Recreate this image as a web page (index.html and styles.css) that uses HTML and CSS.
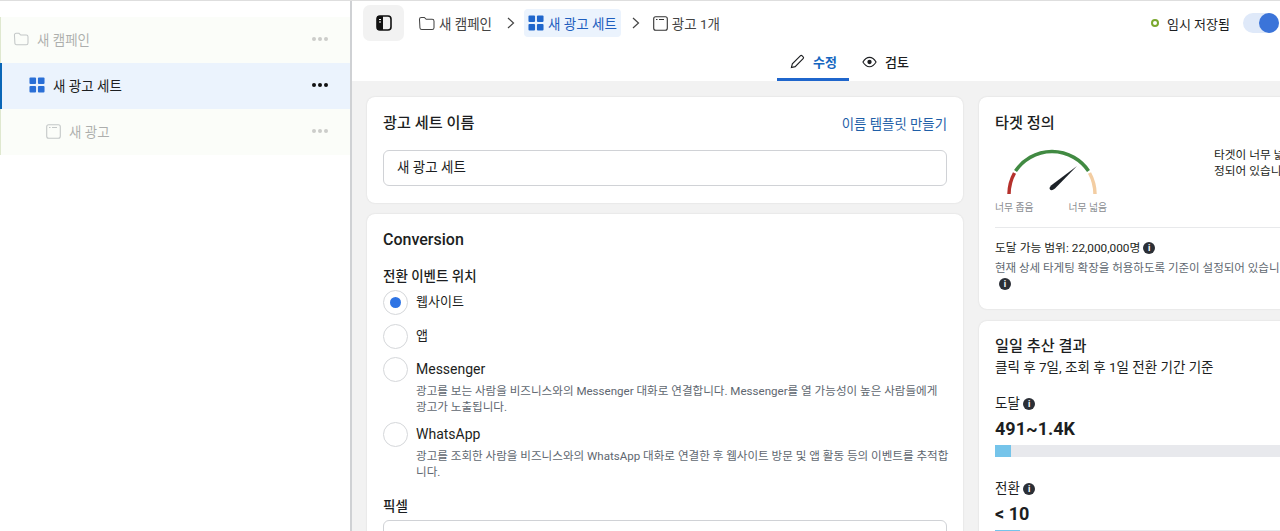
FILE: index.html
```html
<!DOCTYPE html>
<html lang="ko">
<head>
	<meta charset="utf-8">
	<title>새 광고 세트</title>
	<link rel="stylesheet" href="styles.css">
</head>
<body>
	<div class="app">
		<!-- 왼쪽 트리 -->
		<aside class="tree">
			<div class="treeRow dim">
				<svg class="ico" width="16" height="14" viewBox="0 0 18 16"><path d="M1.500 3.500q0-2 2-2h3.200l2 2h6.300q2 0 2 2v7q0 2-2 2h-11q-2 0-2-2z" fill="none" stroke="#606770" stroke-width="1.200"/></svg>
				<span class="treeName">새 캠페인</span>
				<span class="dots"><i></i><i></i><i></i></span>
			</div>
			<div class="treeRow active lv1">
				<svg class="ico" width="16" height="16" viewBox="0 0 17 17"><g fill="#2a6fd6"><rect x="0.500" y="0.500" width="7" height="7" rx="1"/><rect x="9.500" y="0.500" width="7" height="7" rx="1"/><rect x="0.500" y="9.500" width="7" height="7" rx="1"/><rect x="9.500" y="9.500" width="7" height="7" rx="1"/></g></svg>
				<span class="treeName">새 광고 세트</span>
				<span class="dots"><i></i><i></i><i></i></span>
			</div>
			<div class="treeRow dim lv2">
				<svg class="ico" width="15" height="15" viewBox="0 0 15 15"><rect x="0.700" y="0.700" width="13.600" height="13.600" rx="2" fill="none" stroke="#606770" stroke-width="1.100"/><path d="M3 3.500h1.500M6 3.500h5" stroke="#606770" stroke-width="1"/></svg>
				<span class="treeName">새 광고</span>
				<span class="dots"><i></i><i></i><i></i></span>
			</div>
		</aside>

		<main class="main">
			<header class="top">
				<div class="crumbBar">
					<button class="panelBtn">
						<svg width="16" height="16" viewBox="0 0 16 16"><rect x="1" y="1" width="14" height="14" rx="3" fill="none" stroke="#111" stroke-width="1.600"/><path d="M3 1h4v14H3q-2 0-2-2V3q0-2 2-2z" fill="#111"/><path d="M3 4.500h2M3 7h2" stroke="#fff" stroke-width="1"/></svg>
					</button>
					<div class="crumbs">
						<span class="crumb">
							<svg width="17" height="15" viewBox="0 0 18 16"><path d="M1.500 3.500q0-2 2-2h3.200l2 2h6.300q2 0 2 2v7q0 2-2 2h-11q-2 0-2-2z" fill="none" stroke="#444" stroke-width="1.100"/></svg>
							새 캠페인
						</span>
						<svg class="chev" width="8" height="12" viewBox="0 0 8 12"><path d="M1 1l5.500 5L1 11" fill="none" stroke="#444" stroke-width="1.200"/></svg>
						<span class="crumb current">
							<svg width="16" height="16" viewBox="0 0 17 17"><g fill="#1f66cc"><rect x="0.500" y="0.500" width="7" height="7" rx="1"/><rect x="9.500" y="0.500" width="7" height="7" rx="1"/><rect x="0.500" y="9.500" width="7" height="7" rx="1"/><rect x="9.500" y="9.500" width="7" height="7" rx="1"/></g></svg>
							새 광고 세트
						</span>
						<svg class="chev" width="8" height="12" viewBox="0 0 8 12"><path d="M1 1l5.500 5L1 11" fill="none" stroke="#444" stroke-width="1.200"/></svg>
						<span class="crumb">
							<svg width="15" height="15" viewBox="0 0 15 15"><rect x="0.700" y="0.700" width="13.600" height="13.600" rx="2" fill="none" stroke="#333" stroke-width="1.100"/><path d="M3 3.500h1.500M6 3.500h5" stroke="#333" stroke-width="1"/></svg>
							광고 1개
						</span>
					</div>
					<div class="saved">
						<span class="savedDot"></span>
						<span>임시 저장됨</span>
						<span class="toggle"><span class="knob"></span></span>
					</div>
				</div>
				<nav class="tabs">
					<span class="tab on">
						<svg width="15" height="15" viewBox="0 0 16 16"><path d="M1.500 14.500l1-4L11 2q1-1 2 0l1 1q1 1 0 2l-8.500 8.500z" fill="none" stroke="#1c1e21" stroke-width="1.200"/></svg>
						수정
					</span>
					<span class="tab">
						<svg width="15" height="12" viewBox="0 0 16 12"><path d="M1 6q3-5 7-5t7 5q-3 5-7 5T1 6z" fill="none" stroke="#1c1e21" stroke-width="1.200"/><circle cx="8" cy="6" r="2.300" fill="#1c1e21"/></svg>
						검토
					</span>
				</nav>
			</header>

			<div class="content">
				<div class="col left">
					<section class="card nameCard">
						<div class="cardHead">
							<h2>광고 세트 이름</h2>
							<a class="link">이름 템플릿 만들기</a>
						</div>
						<div class="input">새 광고 세트</div>
					</section>

					<section class="card convCard">
						<h2 class="convTitle">Conversion</h2>
						<h3 class="fieldLabel">전환 이벤트 위치</h3>
						<div class="radio checked">
							<span class="circle"></span>
							<div class="radioText"><div class="radioName">웹사이트</div></div>
						</div>
						<div class="radio">
							<span class="circle"></span>
							<div class="radioText"><div class="radioName">앱</div></div>
						</div>
						<div class="radio hasDesc">
							<span class="circle"></span>
							<div class="radioText">
								<div class="radioName latin">Messenger</div>
								<p class="desc">광고를 보는 사람을 비즈니스와의 Messenger 대화로 연결합니다. Messenger를 열 가능성이 높은 사람들에게 광고가 노출됩니다.</p>
							</div>
						</div>
						<div class="radio hasDesc">
							<span class="circle"></span>
							<div class="radioText">
								<div class="radioName latin">WhatsApp</div>
								<p class="desc">광고를 조회한 사람을 비즈니스와의 WhatsApp 대화로 연결한 후 웹사이트 방문 및 앱 활동 등의 이벤트를 추적합니다.</p>
							</div>
						</div>
						<h3 class="fieldLabel pixel">픽셀</h3>
						<div class="input tall"></div>
					</section>
				</div>

				<div class="col right">
					<section class="card audCard">
						<h2>타겟 정의</h2>
						<div class="gaugeRow">
							<div class="gauge">
								<svg width="112" height="59" viewBox="0 0 112 59">
									<path d="M14 53A44 44 0 0 1 19.500 32" fill="none" stroke="#b5312c" stroke-width="3.500"/>
									<path d="M20.500 30A44 44 0 0 1 93.500 30" fill="none" stroke="#418a42" stroke-width="3.500"/>
									<path d="M94.500 32A44 44 0 0 1 100 53" fill="none" stroke="#f3cda2" stroke-width="3.500"/>
									<path d="M82 25L60 47.500Q56.500 50.500 55 48.500Q54 46.500 56 44.500z" fill="#1c2127"/>
								</svg>
								<div class="gaugeLabels"><span>너무 좁음</span><span>너무 넓음</span></div>
							</div>
							<p class="gaugeNote">타겟이 너무 넓습니다. 타겟 설정 기준이 설<br>정되어 있습니다.</p>
						</div>
						<hr class="line">
						<div class="reach">도달 가능 범위: 22,000,000명 <span class="info">i</span></div>
						<p class="reachNote">현재 상세 타게팅 확장을 허용하도록 기준이 설정되어 있습니다.<br><span class="info indent">i</span></p>
					</section>

					<section class="card estCard">
						<h2>일일 추산 결과</h2>
						<div class="estSub">클릭 후 7일, 조회 후 1일 전환 기간 기준</div>
						<div class="metric">도달 <span class="info">i</span></div>
						<div class="metricNum">491~1.4K</div>
						<div class="bar"><div class="fill" style="width: 16px"></div></div>
						<div class="metric second">전환 <span class="info">i</span></div>
						<div class="metricNum">&lt; 10</div>
						<div class="bar"><div class="fill" style="width: 25px"></div></div>
					</section>
				</div>
			</div>
		</main>
	</div>
</body>
</html>
```

FILE: styles.css
```css
* {
	margin: 0;
	padding: 0;
	box-sizing: border-box;
}

html, body {
	height: 531px;
	overflow: hidden;
}

body {
	font-family: Roboto, "Noto Sans CJK KR", sans-serif;
	color: #1c1e21;
	background: #fff;
}

svg {
	display: block;
	flex: none;
}

.app {
	display: flex;
	width: 1280px;
	height: 531px;
	border-top: 1px solid #dedede;
}

/* 왼쪽 트리 */
.tree {
	width: 352px;
	flex: none;
	padding-top: 16px;
	border-right: 2px solid #cfd1d4;
}

.treeRow {
	display: flex;
	align-items: center;
	height: 46px;
	padding: 0 22px 2px 12px;
	font-size: 13.500px;
	border-left: 1px solid #dfe8cf;
	background: #fbfdf9;
}

.treeRow.lv2 {
	padding-left: 45px;
}

.treeRow.dim .ico,
.treeRow.dim .treeName,
.treeRow.dim .dots {
	opacity: 0.35;
}

.treeRow.active {
	background: #ebf3fd;
	border-left: 2px solid #0a66b7;
	padding-left: 27px;
}

.treeName {
	margin-left: 8px;
	flex: 1;
}

.dots {
	display: flex;
	gap: 2px;
}

.dots i {
	width: 4px;
	height: 4px;
	border-radius: 50%;
	background: #111;
}

.dim .dots i {
	background: #777;
}

/* 상단 */
.main {
	flex: 1;
	min-width: 0;
	background: #f2f2f2;
}

.top {
	height: 80px;
	background: #fff;
}

.crumbBar {
	display: flex;
	align-items: center;
	height: 44px;
	padding-left: 11px;
}

.panelBtn {
	display: flex;
	align-items: center;
	justify-content: center;
	width: 41px;
	height: 36px;
	border: 0;
	border-radius: 7px;
	background: #f2f2f2;
}

.crumbs {
	display: flex;
	align-items: center;
	margin-left: 14px;
	font-size: 13.500px;
	color: #444;
}

.crumb {
	display: flex;
	align-items: center;
	gap: 4px;
	height: 28px;
	padding-bottom: 1px;
}

.crumb svg {
	margin-top: 1px;
}

.crumb.current {
	padding: 0 4px 1px;
	border-radius: 4px;
	background: #ebf3fd;
	color: #1f5fbf;
}

.chev {
	margin: 0 9px 0 15px;
}

.current + .chev {
	margin: 0 13px 0 11px;
}

.saved {
	display: flex;
	align-items: center;
	margin-left: auto;
	font-size: 13px;
}

.savedDot {
	width: 8px;
	height: 8px;
	margin-right: 8px;
	border: 2px solid #7aa82e;
	border-radius: 50%;
}

.toggle {
	width: 36px;
	height: 20px;
	margin-left: 13px;
	margin-right: 1px;
	border-radius: 10px;
	background: #dfe9f9;
	display: flex;
	justify-content: flex-end;
	flex: none;
}

.knob {
	width: 20px;
	height: 20px;
	border-radius: 50%;
	background: #3b74d9;
}

.tabs {
	display: flex;
	height: 36px;
	padding-left: 425px;
}

.tab {
	display: flex;
	align-items: center;
	gap: 8px;
	height: 36px;
	padding: 0 13px;
	font-size: 13px;
	font-weight: 500;
	border-bottom: 3px solid transparent;
}

.tab.on {
	color: #1466c0;
	font-weight: 700;
	padding-right: 12px;
	border-bottom-color: #1f66cc;
}

/* 본문 */
.content {
	display: flex;
	gap: 16px;
	align-items: flex-start;
	width: 960px;
	padding: 16px 0 0 15px;
}

.col {
	display: flex;
	flex-direction: column;
	gap: 11px;
	flex: none;
}

.left {
	width: 596px;
}

.right {
	width: 340px;
}

.card {
	background: #fff;
	border-radius: 8px;
	box-shadow: 0 0 2px rgba(0, 0, 0, 0.12);
}

h2 {
	font-size: 15.200px;
	font-weight: 500;
	line-height: 20px;
}

.nameCard {
	height: 106px;
	padding: 16px;
}

.cardHead {
	display: flex;
	justify-content: space-between;
	align-items: center;
}

.link {
	font-size: 13.400px;
	color: #1f5fa8;
}

.input {
	display: flex;
	align-items: center;
	height: 36px;
	margin-top: 17px;
	padding: 0 0 4px 13px;
	border: 1px solid #d0d2d6;
	border-radius: 6px;
	font-size: 13.500px;
}

.convCard {
	height: 400px;
	padding: 15px 16px;
}

.convTitle {
	font-size: 16px;
	line-height: 22px;
}

.fieldLabel {
	margin-top: 16px;
	margin-bottom: 5px;
	font-size: 13.500px;
	font-weight: 500;
	line-height: 18px;
}

.radio {
	display: flex;
	gap: 8px;
	margin-bottom: 8.500px;
}

.radio.hasDesc {
	margin-bottom: 7px;
}

.circle {
	position: relative;
	width: 25px;
	height: 25px;
	flex: none;
	border: 1px solid #d5d7da;
	border-radius: 50%;
}

.checked .circle::after {
	content: "";
	position: absolute;
	left: 6px;
	top: 6px;
	width: 11px;
	height: 11px;
	border-radius: 50%;
	background: #2e74e4;
}

.radioName {
	font-size: 13px;
	line-height: 24px;
}

.radioName.latin {
	font-size: 14px;
}

.desc {
	width: 534px;
	margin-top: 2px;
	font-size: 11.570px;
	line-height: 16px;
	color: #606770;
}

.pixel {
	margin-top: 17px;
	margin-bottom: 5px;
}

.input.tall {
	margin-top: 0;
}

/* 오른쪽 */
.audCard {
	height: 212px;
	padding: 16px;
}

.gaugeRow {
	display: flex;
	margin-top: 8px;
}

.gauge {
	width: 112px;
	flex: none;
}

.gaugeLabels {
	display: flex;
	justify-content: space-between;
	width: 112px;
	margin-top: 1px;
	font-size: 9.800px;
	line-height: 14px;
	color: #8a8d91;
}

.gaugeNote {
	margin-left: 107px;
	margin-top: 6px;
	font-size: 11.700px;
	line-height: 16px;
	white-space: nowrap;
}

.line {
	margin-top: 12px;
	border: 0;
	border-top: 1px solid #e8e9eb;
}

.reach {
	margin-top: 12px;
	font-size: 11.800px;
	line-height: 16px;
	white-space: nowrap;
}

.reachNote {
	margin-top: 4px;
	font-size: 11.500px;
	line-height: 16px;
	color: #606770;
	white-space: nowrap;
}

.info {
	display: inline-block;
	width: 12px;
	height: 12px;
	border-radius: 50%;
	background: #2b2f36;
	color: #fff;
	font-size: 9px;
	font-weight: 700;
	line-height: 12px;
	text-align: center;
	vertical-align: 1px;
}

.info.indent {
	margin-left: 4px;
}

.estCard {
	height: 300px;
	margin-top: 1px;
	padding: 15px 16px;
}

.estSub {
	margin-top: 2px;
	font-size: 13.500px;
	line-height: 18px;
}

.metric {
	margin-top: 18px;
	font-size: 13.500px;
	line-height: 18px;
}

.metric.second {
	margin-top: 22px;
}

.metricNum {
	margin-top: 6px;
	font-size: 18px;
	font-weight: 700;
	line-height: 22px;
}

.bar {
	height: 12px;
	margin-top: 5px;
	background: #e8e9ed;
}

.fill {
	height: 12px;
	background: #75c4ea;
}
```
